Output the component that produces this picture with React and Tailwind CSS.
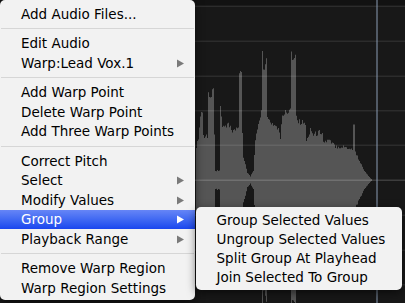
import React from 'react';

const FONT = { fontFamily: '"DejaVu Sans", Verdana, sans-serif' };

// envelope keypoints of the audio region [x, amplitude above the centre line]
const ENVELOPE = [
    [196, 35], [198, 45], [200, 67], [202, 72], [203, 47], [207, 47], [208, 88], [213, 94],
    [214, 48], [215, 10], [219, 10], [220, 80], [222, 55], [227, 60], [232, 52], [238, 55],
    [239, 115], [241, 112], [242, 50], [243, 25], [247, 8], [250, 4], [253, 10], [255, 40],
    [258, 62], [261, 70], [262, 139], [263, 125], [266, 122], [267, 65], [270, 62], [278, 55],
    [280, 43], [282, 70], [287, 72], [290, 78], [291, 137], [293, 132], [295, 130], [296, 73],
    [298, 62], [305, 60], [306, 40], [310, 55], [313, 48], [318, 50], [322, 52], [323, 40],
    [328, 42], [335, 36], [345, 35], [352, 33], [353, 58], [354, 58], [355, 30], [360, 18],
    [365, 8], [370, 2], [372, 0],
];

const CENTER = 180;

const ampAt = (x) => {
    for (let i = 0; i < ENVELOPE.length - 1; i++) {
        const [x0, a0] = ENVELOPE[i];
        const [x1, a1] = ENVELOPE[i + 1];
        if (x >= x0 && x <= x1) return a0 + ((a1 - a0) * (x - x0)) / (x1 - x0 || 1);
    }
    return 0;
};

const buildWave = () => {
    const top = [];
    for (let x = 196; x <= 372; x++) {
        const jitter = 0.88 + 0.12 * Math.abs(Math.sin(x * 12.9898) * 43758.5453 % 1);
        const a = ampAt(x) * jitter;
        top.push([x, CENTER - a], [x + 1, CENTER - a]);
    }
    const bottom = top.map(([x, y]) => [x, 2 * CENTER - y]).reverse();
    return [...top, ...bottom].map(([x, y]) => `${x},${y.toFixed(1)}`).join(' ');
};

const WAVE = buildWave();
const GRID = [6, 41, 76, 110.5, 145, 215, 250, 284.5];

const Arrow = ({ white }) => (
    <svg width="7" height="9" viewBox="0 0 7 9">
        <polygon points="0,0.5 7,4.5 0,8.5" fill={white ? '#ffffff' : '#7a7a7a'} />
    </svg>
);

const Item = ({ label, sub, active }) => (
    <div
        className={`h-[19.5px] flex items-center justify-between pl-[21px] pr-[11px] text-[13.5px] ${active ? 'text-white bg-gradient-to-b from-[#6685f6] to-[#1a45ee]' : 'text-black'}`}
    >
        <span>{label}</span>
        {sub && <Arrow white={active} />}
    </div>
);

const Separator = () => (
    <div className="h-[10px] flex items-center px-px">
        <div className="h-px w-full bg-[#d6d6d6]" />
    </div>
);

const MENU = [
    ['Add Audio Files...'],
    '-',
    ['Edit Audio'],
    ['Warp:Lead Vox.1', true],
    '-',
    ['Add Warp Point'],
    ['Delete Warp Point'],
    ['Add Three Warp Points'],
    '-',
    ['Correct Pitch'],
    ['Select', true],
    ['Modify Values', true],
    ['Group', true, true],
    ['Playback Range', true],
    '-',
    ['Remove Warp Region'],
    ['Warp Region Settings'],
];

const SUBMENU = ['Group Selected Values', 'Ungroup Selected Values', 'Split Group At Playhead', 'Join Selected To Group'];

export default function App() {
    return (
        <div className="relative w-[405px] h-[303px] overflow-hidden bg-[#181818]" style={FONT}>
            {/* Audio editor canvas */}
            <svg width="405" height="303" className="block">
                <rect x="0" y="0" width="405" height="6" fill="#121212" />
                <polygon points={WAVE} fill="#555555" />
                {GRID.map(y => (
                    <rect key={y} x="0" y={y - 0.5} width="405" height="1.5" fill="#ffffff" fillOpacity="0.09" />
                ))}
                <rect x="0" y="179.5" width="405" height="1.5" fill="#ffffff" fillOpacity="0.16" />
                <rect x="376.5" y="0" width="1" height="303" fill="#8a9bb3" />
            </svg>

            {/* Context menu */}
            <div className="absolute left-0 top-0 w-[195px] h-[300px] rounded-[5px] bg-[#f2f2f2] py-[4.25px] shadow-[0_3px_10px_rgba(0,0,0,0.55)]">
                {MENU.map((m, i) =>
                    m === '-' ? <Separator key={i} /> : <Item key={i} label={m[0]} sub={m[1]} active={m[2]} />
                )}
            </div>

            {/* Group submenu */}
            <div className="absolute left-[196px] top-[207px] w-[206px] h-[83px] rounded-[5px] bg-[#f2f2f2] py-[3.5px] shadow-[0_3px_10px_rgba(0,0,0,0.55)]">
                {SUBMENU.map(label => (
                    <div key={label} className="h-[19px] flex items-center pl-[20.5px] text-[13.5px] text-black">
                        {label}
                    </div>
                ))}
            </div>
        </div>
    );
}
